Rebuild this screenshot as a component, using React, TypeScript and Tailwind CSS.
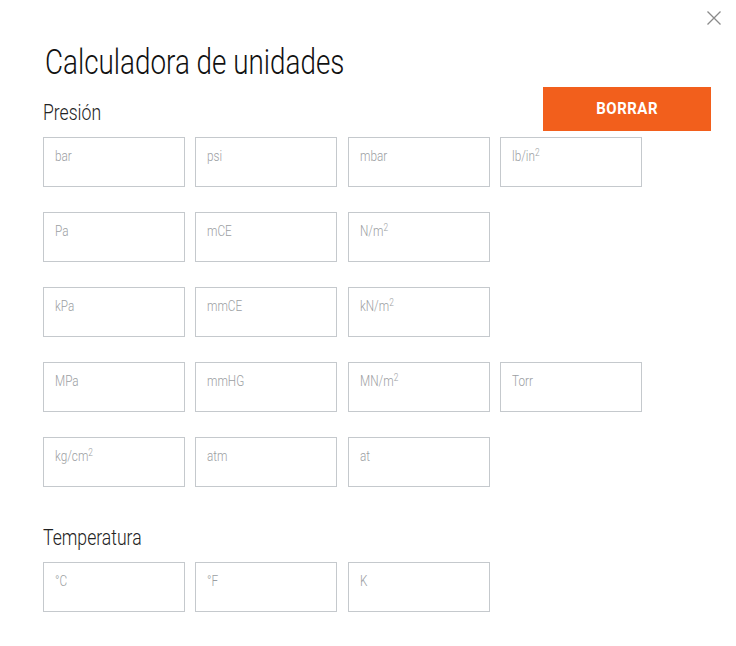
import React from "react";

const FONT = { fontFamily: 'Roboto, "DejaVu Sans Condensed", sans-serif' };

type Unit = { label: string; sup?: string };

const pressureRows: Unit[][] = [
  [{ label: "bar" }, { label: "psi" }, { label: "mbar" }, { label: "lb/in", sup: "2" }],
  [{ label: "Pa" }, { label: "mCE" }, { label: "N/m", sup: "2" }],
  [{ label: "kPa" }, { label: "mmCE" }, { label: "kN/m", sup: "2" }],
  [{ label: "MPa" }, { label: "mmHG" }, { label: "MN/m", sup: "2" }, { label: "Torr" }],
  [{ label: "kg/cm", sup: "2" }, { label: "atm" }, { label: "at" }],
];

const tempRows: Unit[][] = [[{ label: "°C" }, { label: "°F" }, { label: "K" }]];

function Box({ u }: { u: Unit }) {
  return (
    <div className="w-[142px] h-[50px] border border-[#c5c9cd] bg-white pl-[11px] pt-[6px]">
      <span className="inline-block origin-left scale-x-[0.84] text-[14px] leading-[16px] font-light text-[#9b9ea2] whitespace-nowrap">
        {u.label}
        {u.sup && <sup className="text-[10px]">{u.sup}</sup>}
      </span>
    </div>
  );
}

function Section({ title, rows, action, className }: { title: string; rows: Unit[][]; action?: React.ReactNode; className?: string }) {
  return (
    <section className={className}>
      <div className="h-[44px] flex justify-between items-end">
        <h2 className="inline-block origin-left scale-x-[0.8] text-[22px] leading-none font-light text-[#222] mb-[7px] whitespace-nowrap">
          {title}
        </h2>
        {action}
      </div>
      <div className="mt-[6px] flex flex-col gap-[25px]">
        {rows.map((r, i) => (
          <div key={i} className="flex gap-[10.3px]">
            {r.map((u) => (
              <Box key={u.label} u={u} />
            ))}
          </div>
        ))}
      </div>
    </section>
  );
}

export default function App() {
  return (
    <div className="relative w-[736px] h-[646px] bg-white pl-[43px] pr-[25px] pt-[43px] overflow-hidden" style={FONT}>
      <button className="absolute top-[10px] right-[14px] w-[16px] h-[16px]" aria-label="Cerrar">
        <svg viewBox="0 0 16 16" width="16" height="16" fill="none" stroke="#8a8a8a" strokeWidth="1.3">
          <path d="M1.5 1.5L14.5 14.5M14.5 1.5L1.5 14.5" />
        </svg>
      </button>
      <h1 className="inline-block origin-left scale-x-[0.795] text-[35px] leading-[40px] font-light text-[#111] ml-[2px] whitespace-nowrap">
        Calculadora de unidades
      </h1>
      <Section
        className="mt-[4px]"
        title="Presión"
        rows={pressureRows}
        action={
          <button className="w-[168px] h-[44px] bg-[#f25f1c] text-white">
            <span className="inline-block scale-x-[0.88] font-bold text-[17px] tracking-[0.6px]">BORRAR</span>
          </button>
        }
      />
      <Section className="mt-[25px]" title="Temperatura" rows={tempRows} />
    </div>
  );
}
